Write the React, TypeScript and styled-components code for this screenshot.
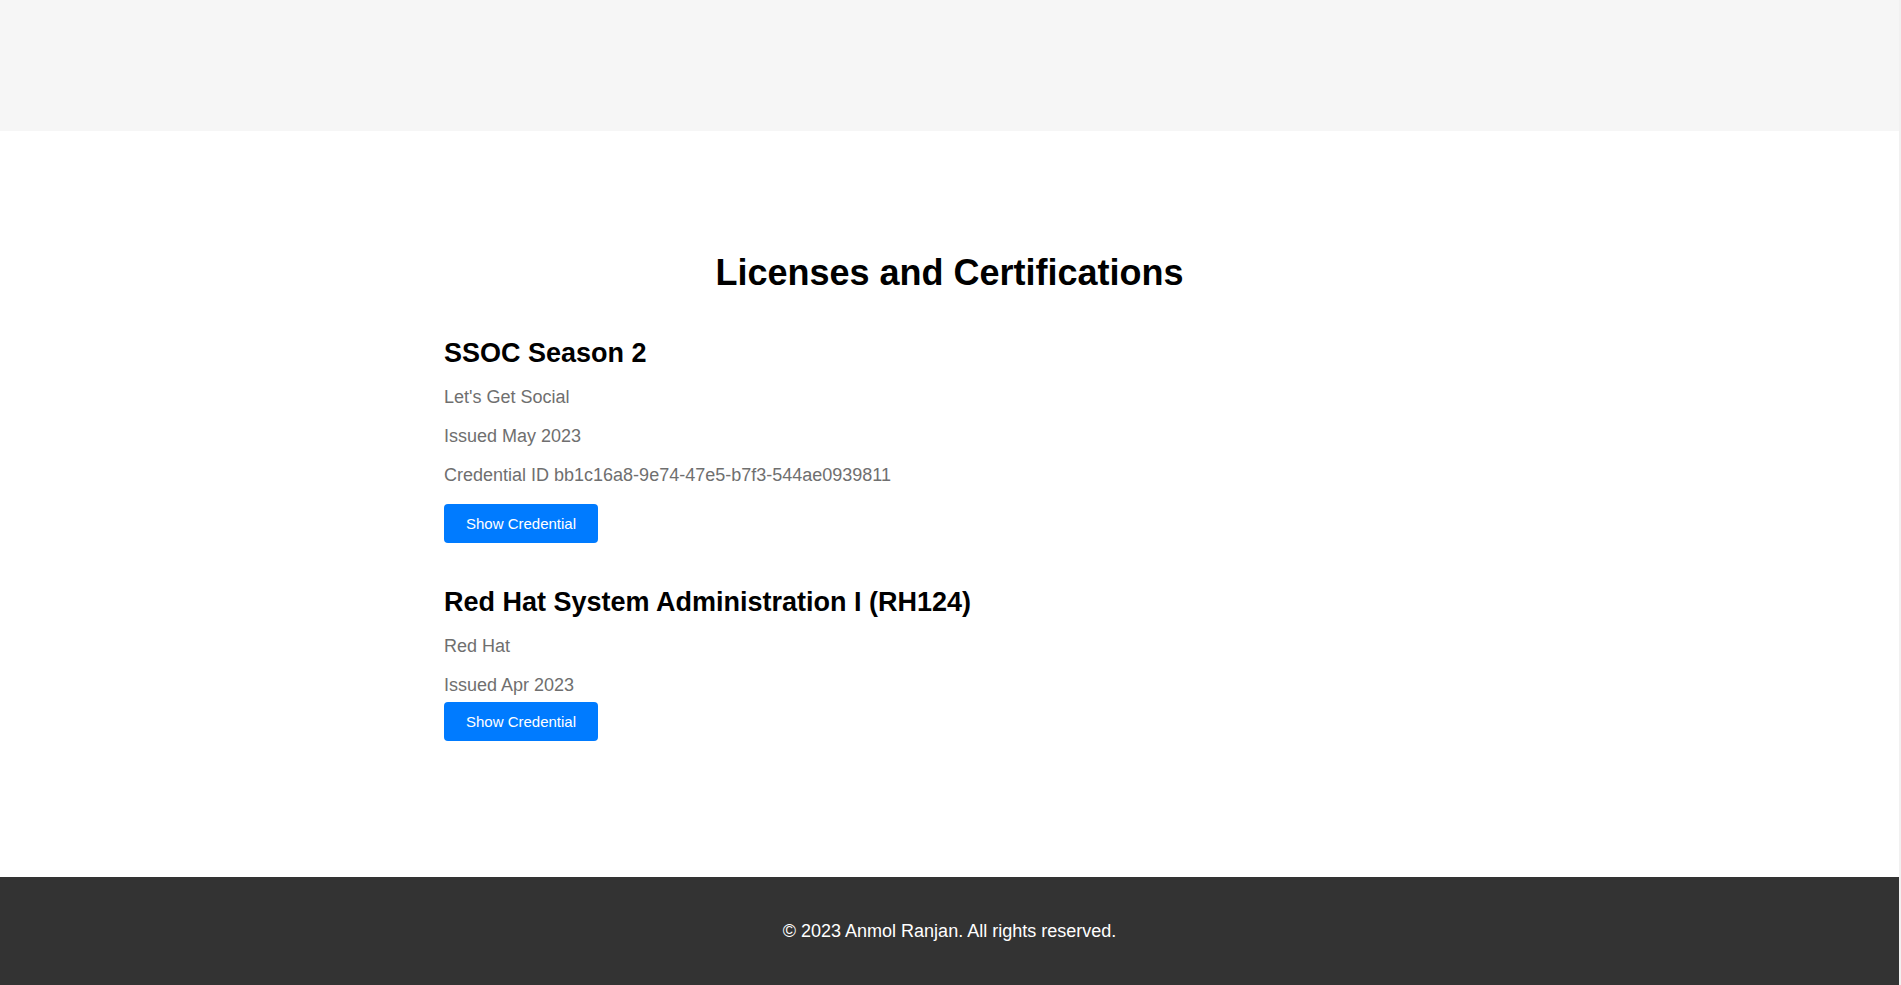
import React from "react";
import styled, { createGlobalStyle } from "styled-components";

const Global = createGlobalStyle`
  html { background: #f1f1f1; }
  body {
    margin: 0 2px 0 0;
    background: #ffffff;
    font-family: "Liberation Sans", Arial, sans-serif;
    color: #000;
  }
`;

const Page = styled.div`
  display: flex;
  flex-direction: column;
  min-height: 985px;
`;

const Header = styled.header`
  height: 131px;
  background: #f6f6f6;
`;

const Main = styled.main`
  flex: 1;
  padding: 121px 0 40px;
`;

const Section = styled.section`
  max-width: 1011px;
  margin: 0 auto;
`;

const Title = styled.h2`
  margin: 0 0 45px;
  text-align: center;
  font-size: 36px;
  font-weight: bold;
  line-height: 41px;
`;

const Cert = styled.div`
  margin-bottom: 44px;
`;

const CertName = styled.h3`
  margin: 0 0 18px;
  font-size: 27px;
  font-weight: bold;
  line-height: 31px;
`;

const Info = styled.p<{ $tight?: boolean }>`
  margin: 0 0 ${(p) => (p.$tight ? 6 : 18)}px;
  font-size: 18px;
  line-height: 21px;
  color: #6f6f6f;
`;

const Button = styled.button`
  display: inline-block;
  box-sizing: border-box;
  width: 154px;
  height: 39px;
  padding: 0;
  border: none;
  border-radius: 4px;
  background: #007bff;
  color: #fff;
  font-family: "Liberation Sans", Arial, sans-serif;
  font-size: 15px;
  cursor: pointer;
  vertical-align: top;
`;

const Footer = styled.footer`
  height: 108px;
  background: #333333;
  color: #fff;
  display: flex;
  align-items: center;
  justify-content: center;
  font-size: 18px;
`;

type C = { name: string; org: string; issued: string; id?: string };

const certs: C[] = [
  {
    name: "SSOC Season 2",
    org: "Let's Get Social",
    issued: "Issued May 2023",
    id: "Credential ID bb1c16a8-9e74-47e5-b7f3-544ae0939811",
  },
  {
    name: "Red Hat System Administration I (RH124)",
    org: "Red Hat",
    issued: "Issued Apr 2023",
  },
];

export default function App() {
  return (
    <>
      <Global />
      <Page>
        <Header />
        <Main>
          <Section>
            <Title>Licenses and Certifications</Title>
            {certs.map((c) => (
              <Cert key={c.name}>
                <CertName>{c.name}</CertName>
                <Info>{c.org}</Info>
                <Info $tight={!c.id}>{c.issued}</Info>
                {c.id && <Info>{c.id}</Info>}
                <Button>Show Credential</Button>
              </Cert>
            ))}
          </Section>
        </Main>
        <Footer>© 2023 Anmol Ranjan. All rights reserved.</Footer>
      </Page>
    </>
  );
}
